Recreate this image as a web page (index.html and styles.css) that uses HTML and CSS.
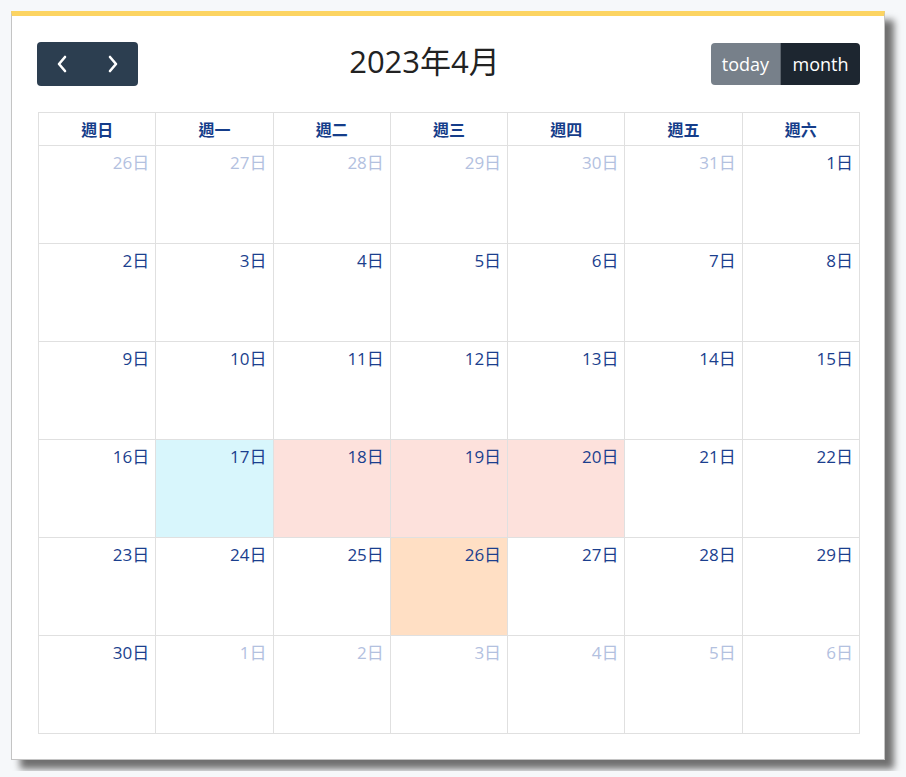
FILE: index.html
```html
<!DOCTYPE html>
<html lang="zh-Hant">
<head>
<meta charset="utf-8">
<title>Calendar</title>
<link rel="stylesheet" href="styles.css">
</head>
<body>
<div class="card">
  <div class="toolbar">
    <div class="btn-group nav">
      <button class="btn btn-nav" aria-label="prev"><svg width="12" height="18" viewBox="0 0 12 18"><path d="M9 2 L3 9 L9 16" fill="none" stroke="#fff" stroke-width="2.6" stroke-linecap="round" stroke-linejoin="round"/></svg></button>
      <button class="btn btn-nav" aria-label="next"><svg width="12" height="18" viewBox="0 0 12 18"><path d="M3 2 L9 9 L3 16" fill="none" stroke="#fff" stroke-width="2.6" stroke-linecap="round" stroke-linejoin="round"/></svg></button>
    </div>
    <h2 class="title">2023年4月</h2>
    <div class="btn-group views">
      <button class="btn btn-today">today</button>
      <button class="btn btn-month">month</button>
    </div>
  </div>
  <table class="cal">
    <thead>
      <tr><th>週日</th><th>週一</th><th>週二</th><th>週三</th><th>週四</th><th>週五</th><th>週六</th></tr>
    </thead>
    <tbody>
      <tr>
        <td class="other">26日</td><td class="other">27日</td><td class="other">28日</td><td class="other">29日</td><td class="other">30日</td><td class="other">31日</td><td>1日</td>
      </tr>
      <tr>
        <td>2日</td><td>3日</td><td>4日</td><td>5日</td><td>6日</td><td>7日</td><td>8日</td>
      </tr>
      <tr>
        <td>9日</td><td>10日</td><td>11日</td><td>12日</td><td>13日</td><td>14日</td><td>15日</td>
      </tr>
      <tr>
        <td>16日</td><td class="today">17日</td><td class="pink">18日</td><td class="pink">19日</td><td class="pink">20日</td><td>21日</td><td>22日</td>
      </tr>
      <tr>
        <td>23日</td><td>24日</td><td>25日</td><td class="peach">26日</td><td>27日</td><td>28日</td><td>29日</td>
      </tr>
      <tr>
        <td>30日</td><td class="other">1日</td><td class="other">2日</td><td class="other">3日</td><td class="other">4日</td><td class="other">5日</td><td class="other">6日</td>
      </tr>
    </tbody>
  </table>
</div>
</body>
</html>
```

FILE: styles.css
```css
html, body {
  margin: 0;
  padding: 0;
  background: #f6f8fa;
}
body {
  padding: 11px;
  font-family: "Open Sans", "Noto Sans CJK TC", sans-serif;
}
.card {
  width: 874px;
  box-sizing: border-box;
  background: #fff;
  border: 1px solid #c4c4c4;
  border-top: 5px solid #fcd462;
  padding: 26px 24px 25px 26px;
  box-shadow: 9px 9px 7px #707070;
}
.toolbar {
  display: flex;
  justify-content: space-between;
  align-items: center;
  height: 44px;
  margin-bottom: 26px;
}
.btn-group {
  display: flex;
  border-radius: 4px;
  overflow: hidden;
}
.btn {
  border: 0;
  margin: 0;
  color: #fff;
  font-family: "Open Sans", sans-serif;
  font-size: 18px;
  cursor: pointer;
}
.nav {
  height: 44px;
  margin-left: -1px;
}
.btn-nav {
  width: 50.5px;
  background: #2c3e50;
  display: flex;
  align-items: center;
  justify-content: center;
  padding: 0;
}
.views {
  height: 42px;
}
.btn-today {
  width: 70px;
  background: #77808a;
  padding: 0;
  border-right: 1px solid #5c646d;
}
.btn-month {
  width: 79px;
  background: #1d2630;
  padding: 0;
}
.title {
  margin: 0 0 6px 0;
  font-weight: 400;
  font-size: 31px;
  line-height: 40px;
  color: #222;
}
.cal {
  width: 822px;
  border-collapse: collapse;
  table-layout: fixed;
}
.cal th, .cal td {
  border: 1px solid #e0e0e0;
}
.cal th {
  height: 32px;
  padding: 0;
  font-size: 16px;
  font-weight: 700;
  color: #153d8a;
  font-family: "Noto Sans CJK TC", sans-serif;
}
.cal td {
  height: 92px;
  padding: 5px 6px 0 0;
  vertical-align: top;
  text-align: right;
  font-size: 17px;
  line-height: 24px;
  color: #1b3f8e;
}
.cal td.other {
  color: #b3c1df;
}
.cal td.today {
  background: #d8f6fc;
}
.cal td.pink {
  background: #fde1dc;
}
.cal td.peach {
  background: #ffdfc4;
}
```
